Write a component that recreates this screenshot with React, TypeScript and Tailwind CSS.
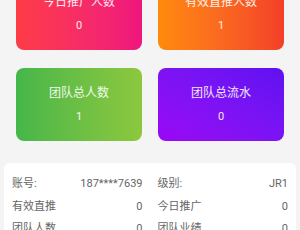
import React from "react";

const cards = [
  { title: "今日推广人数", value: "0", cls: "bg-gradient-to-r from-[#fe3b46] to-[#ef157d]" },
  { title: "有效直推人数", value: "1", cls: "bg-gradient-to-r from-[#ff8a0c] to-[#f33f28]" },
  { title: "团队总人数", value: "1", cls: "bg-gradient-to-r from-[#44b64a] to-[#8cc83e]" },
  { title: "团队总流水", value: "0", cls: "bg-gradient-to-tr from-[#9a06f6] to-[#5f10f2]" },
];

const rows: [string, string, string, string][] = [
  ["账号:", "187****7639", "级别:", "JR1"],
  ["有效直推", "0", "今日推广", "0"],
  ["团队人数", "0", "团队业绩", "0"],
];

export default function App() {
  return (
    <div
      className="w-[300px] h-[230px] overflow-hidden bg-[#f4f4f4]"
      style={{ fontFamily: 'Roboto, "Noto Sans CJK SC", sans-serif' }}
    >
      <div className="-mt-[23px] px-4 grid grid-cols-2 gap-x-4 gap-y-[18px]">
        {cards.map((c) => (
          <div
            key={c.title}
            className={`h-[73px] rounded-lg flex flex-col items-center justify-center text-white/90 ${c.cls}`}
          >
            <div className="text-[12px] leading-[16px]">{c.title}</div>
            <div className="text-[11px] leading-[14px] mt-[9px]">{c.value}</div>
          </div>
        ))}
      </div>
      <div className="mt-[22px] mx-1 bg-white rounded-md px-2 pt-[10px]">
        {rows.map((r) => (
          <div key={r[0]} className="grid grid-cols-2 gap-x-[15px] h-[22.5px] items-center text-[11px] text-[#666]">
            <div className="flex justify-between">
              <span>{r[0]}</span>
              <span>{r[1]}</span>
            </div>
            <div className="flex justify-between">
              <span>{r[2]}</span>
              <span>{r[3]}</span>
            </div>
          </div>
        ))}
      </div>
    </div>
  );
}
